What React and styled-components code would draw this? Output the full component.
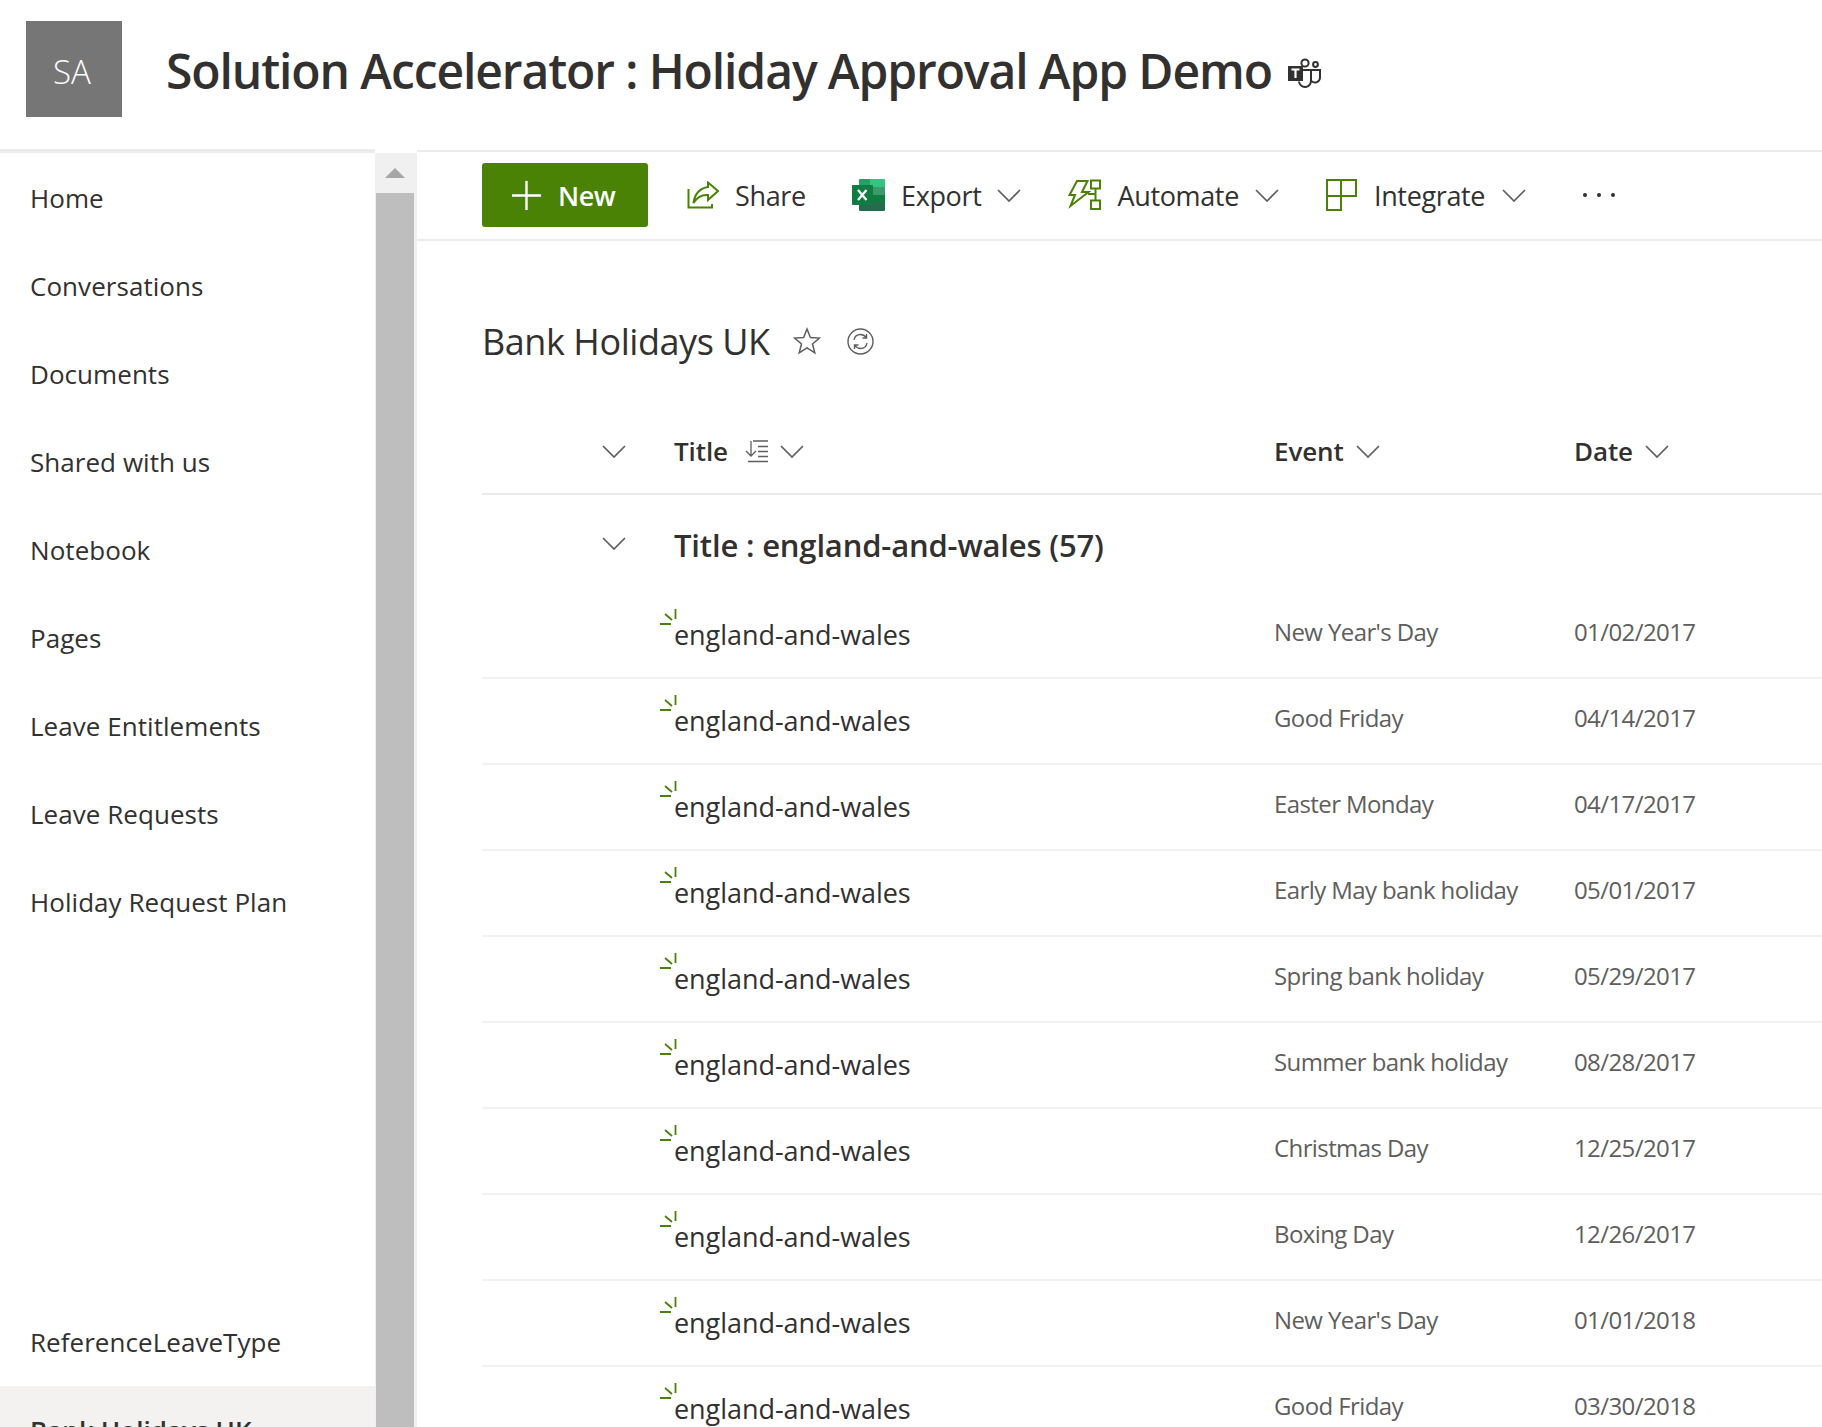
import React from 'react'
import styled, { createGlobalStyle } from 'styled-components'

const GlobalStyle = createGlobalStyle`
html,body{margin:0;padding:0;background:#fff;}
body{font-family:"Open Sans","Noto Sans",sans-serif;color:#323130;}
*{box-sizing:border-box;}
`

const navItems = ['Home', 'Conversations', 'Documents', 'Shared with us', 'Notebook', 'Pages', 'Leave Entitlements', 'Leave Requests', 'Holiday Request Plan']

const rows = [
  ["New Year's Day", '01/02/2017'],
  ['Good Friday', '04/14/2017'],
  ['Easter Monday', '04/17/2017'],
  ['Early May bank holiday', '05/01/2017'],
  ['Spring bank holiday', '05/29/2017'],
  ['Summer bank holiday', '08/28/2017'],
  ['Christmas Day', '12/25/2017'],
  ['Boxing Day', '12/26/2017'],
  ["New Year's Day", '01/01/2018'],
  ['Good Friday', '03/30/2018'],
]

function Chevron({ w = 24, color = '#605e5c' }) {
  return (
    <svg width={w} height={w / 2 + 1} viewBox="0 0 24 13" fill="none">
      <path d="M1 1l11 11L23 1" stroke={color} strokeWidth="1.7" />
    </svg>
  )
}

function Teams() {
  return (
    <svg width="33" height="31" viewBox="0 0 33 31" fill="none">
      <circle cx="17" cy="5" r="3.6" stroke="#323130" strokeWidth="2" />
      <circle cx="27.5" cy="6.5" r="2.4" stroke="#323130" strokeWidth="2" />
      <path d="M13 12h10v10.5a6 6 0 0 1-12 1" stroke="#323130" strokeWidth="2" />
      <path d="M23 12h9v8a5 5 0 0 1-9 2.5" stroke="#323130" strokeWidth="2" />
      <rect x="0" y="8" width="15" height="15" fill="#323130" />
      <path d="M3.5 11.5h8M7.5 11.5v8.5" stroke="#fff" strokeWidth="2.2" />
    </svg>
  )
}

function ShareIcon() {
  return (
    <svg width="32" height="28" viewBox="0 0 32 28" fill="none" stroke="#498205" strokeWidth="2">
      <path d="M1.500 8v18.500h23.500V23" />
      <path d="M21 1.500L31 10l-10 9v-5c-6-.5-11 2-14.500 8C7.500 13 13 7 21 6z" />
    </svg>
  )
}

function ExcelIcon() {
  return (
    <svg width="33" height="32" viewBox="0 0 33 32">
      <path d="M7 1a1 1 0 0 1 1-1h10v8H7z" fill="#21a366" />
      <path d="M18 0h14a1 1 0 0 1 1 1v7H18z" fill="#33c481" />
      <rect x="7" y="8" width="11" height="8" fill="#21a366" />
      <rect x="18" y="8" width="15" height="8" fill="#3a9a6c" />
      <rect x="7" y="16" width="26" height="8" fill="#107c41" />
      <path d="M7 24h26v7a1 1 0 0 1-1 1H8a1 1 0 0 1-1-1z" fill="#276b4e" />
      <rect x="0" y="6" width="21" height="20" rx="1" fill="#107c41" />
      <path d="M6 11l8.500 10M14.500 11L6 21" stroke="#fff" strokeWidth="2.300" />
    </svg>
  )
}

function AutomateIcon() {
  return (
    <svg width="33" height="32" viewBox="0 0 33 32" fill="none" stroke="#498205" strokeWidth="2">
      <path d="M9 2h10.500L14 13h6.500L2.500 27 7 16H1.500z" />
      <rect x="23" y="1.500" width="9" height="8" />
      <rect x="23" y="21.500" width="9" height="8.500" />
      <path d="M27.500 9.500v12M20 15h7.500" />
    </svg>
  )
}

function IntegrateIcon() {
  return (
    <svg width="31" height="32" viewBox="0 0 31 32" fill="none" stroke="#498205" strokeWidth="2">
      <path d="M1 1h29v16H15v14H1zM1 17h14M15 1v16" />
    </svg>
  )
}

function StarIcon() {
  return (
    <svg width="28" height="28" viewBox="0 0 28 28" fill="none">
      <path d="M14 2l3.400 8.500 9.100.6-7 5.800 2.300 8.900L14 20.900 6.200 25.800l2.300-8.900-7-5.800 9.100-.6z" stroke="#605e5c" strokeWidth="1.500" />
    </svg>
  )
}

function SyncIcon() {
  return (
    <svg width="27" height="27" viewBox="0 0 27 27" fill="none" stroke="#605e5c" strokeWidth="1.400">
      <circle cx="13.500" cy="13.500" r="12.500" />
      <path d="M7 12c.6-3.500 3.300-5.500 6.500-5.500 2.300 0 4.200 1 5.500 2.800M19.500 6v4h-4" />
      <path d="M20 15c-.6 3.500-3.300 5.500-6.500 5.500-2.300 0-4.200-1-5.500-2.800M7.500 21v-4h4" />
    </svg>
  )
}

function SortIcon() {
  return (
    <svg width="24" height="23" viewBox="0 0 24 23" fill="none" stroke="#605e5c" strokeWidth="1.300">
      <path d="M6 1v15M1 11l5 5 5-5" />
      <path d="M8 1h15M13 6.500h10M13 11.500h10M13 16.500h10M3 21.500h20" />
    </svg>
  )
}

function Glitter() {
  return (
    <svg width="18" height="17" viewBox="0 0 18 17" fill="none" stroke="#498205" strokeWidth="1.800">
      <path d="M0 15h11M5 5l7 6M15.500 0v10" />
    </svg>
  )
}

export default function App() {
  return (
    <Page>
      <GlobalStyle />
      <SiteHeader>
        <SiteLogo>SA</SiteLogo>
        <SiteTitle>Solution Accelerator : Holiday Approval App Demo</SiteTitle>
        <TeamsMark><Teams /></TeamsMark>
      </SiteHeader>
      <Body>
        <SideNav>
          {navItems.map((n) => <NavItem key={n}>{n}</NavItem>)}
          <NavItem $gap>ReferenceLeaveType</NavItem>
          <NavItem $active>Bank Holidays UK</NavItem>
        </SideNav>
        <NavScroll>
          <ScrollUp />
          <ScrollThumb />
        </NavScroll>
        <Main>
          <CommandBar>
            <NewButton>
              <svg width="29" height="29" viewBox="0 0 29 29" stroke="#fff" strokeWidth="2.400"><path d="M14.500 0v29M0 14.500h29" /></svg>
              New
            </NewButton>
            <Command $left={39} $width={149}><ShareIcon /><CommandLabel>Share</CommandLabel></Command>
            <Command $left={16}><ExcelIcon /><CommandLabel>Export</CommandLabel><Chevron /></Command>
            <Command $left={47}><AutomateIcon /><CommandLabel>Automate</CommandLabel><Chevron /></Command>
            <Command $left={47} $gap={17}><IntegrateIcon /><CommandLabel>Integrate</CommandLabel><Chevron /></Command>
            <MoreDots>
              <Dot /><Dot /><Dot />
            </MoreDots>
          </CommandBar>
          <ListHeading>
            <ListName>Bank Holidays UK</ListName>
            <ListActions>
              <StarIcon />
              <SyncIcon />
            </ListActions>
          </ListHeading>
          <ListTable>
            <HeaderRow>
              <ExpandCell><Chevron w={24} /></ExpandCell>
              <HeaderCell>Title <SortMark><SortIcon /></SortMark><Chevron /></HeaderCell>
              <HeaderCell>Event <Chevron /></HeaderCell>
              <HeaderCell>Date <Chevron /></HeaderCell>
            </HeaderRow>
            <GroupRow>
              <ExpandCell><Chevron w={24} /></ExpandCell>
              <GroupName>Title : england-and-wales (57)</GroupName>
            </GroupRow>
            {rows.map(([event, date], i) => (
              <DataRow key={i}>
                <span />
                <TitleCell><NewMark><Glitter /></NewMark>england-and-wales</TitleCell>
                <MetaCell>{event}</MetaCell>
                <MetaCell>{date}</MetaCell>
              </DataRow>
            ))}
          </ListTable>
        </Main>
      </Body>
    </Page>
  )
}

const Page = styled.div`
  width: 1822px;
  height: 1427px;
  overflow: hidden;
  display: flex;
  flex-direction: column;
`
const SiteHeader = styled.header`
  height: 149px;
  flex: none;
  display: flex;
  align-items: center;
  padding: 0 0 11px 26px;
`
const SiteLogo = styled.div`
  width: 96px;
  height: 96px;
  background: #767676;
  color: #fff;
  font-size: 33px;
  font-weight: 300;
  display: flex;
  align-items: center;
  justify-content: center;
  padding: 5px 4px 0 0;
`
const SiteTitle = styled.h1`
  margin: 4px 0 0 44px;
  font-size: 48px;
  font-weight: 550;
  line-height: 64px;
  letter-spacing: -1.1px;
  color: #323130;
  white-space: nowrap;
`
const TeamsMark = styled.span`
  margin: 8px 0 0 16px;
  display: flex;
`
const Body = styled.div`
  flex: 1;
  min-height: 0;
  display: flex;
`
const SideNav = styled.nav`
  width: 375px;
  flex: none;
  border-top: 4px solid #edebe9;
  padding-top: 1px;
  display: flex;
  flex-direction: column;
`
const NavItem = styled.a`
  height: 88px;
  flex: none;
  display: flex;
  align-items: center;
  padding-left: 30px;
  font-size: 26px;
  letter-spacing: 0.05px;
  color: #323130;
  font-weight: ${(p) => (p.$active ? 600 : 400)};
  background: ${(p) => (p.$active ? '#f3f2f1' : 'transparent')};
  margin-top: ${(p) => (p.$gap ? '352px' : '0')};
`
const NavScroll = styled.div`
  width: 42px;
  flex: none;
  margin-top: 4px;
  background: #f0f0f0;
  display: flex;
  flex-direction: column;
  align-items: center;
  padding-right: 3px;
`
const ScrollUp = styled.div`
  width: 0;
  height: 0;
  margin-top: 15px;
  border-left: 10px solid transparent;
  border-right: 10px solid transparent;
  border-bottom: 10px solid #a6a6a6;
`
const ScrollThumb = styled.div`
  width: 38px;
  flex: 1;
  margin-top: 15px;
  background: #bebebe;
`
const Main = styled.main`
  flex: 1;
  min-width: 0;
  margin-top: 1px;
  border-top: 2px solid #edebe9;
  display: flex;
  flex-direction: column;
`
const CommandBar = styled.div`
  height: 89px;
  flex: none;
  border-bottom: 2px solid #edebe9;
  padding: 0 0 1px 65px;
  display: flex;
  align-items: center;
`
const NewButton = styled.button`
  width: 166px;
  height: 64px;
  border: none;
  border-radius: 3px;
  background: #498205;
  color: #fff;
  font-family: inherit;
  font-size: 27px;
  font-weight: 600;
  letter-spacing: -0.5px;
  display: flex;
  align-items: center;
  gap: 17px;
  padding: 0 0 0 30px;
`
const Command = styled.div`
  display: flex;
  align-items: center;
  margin-left: ${(p) => p.$left}px;
  gap: ${(p) => p.$gap || 16}px;
  ${(p) => (p.$width ? `width: ${p.$width}px;` : '')}
`
const CommandLabel = styled.span`
  font-size: 27px;
  letter-spacing: -0.35px;
  color: #323130;
`
const MoreDots = styled.div`
  display: flex;
  gap: 10px;
  margin-left: 57px;
`
const Dot = styled.i`
  width: 4px;
  height: 4px;
  border-radius: 50%;
  background: #323130;
`
const ListHeading = styled.div`
  height: 50px;
  flex: none;
  margin: 75px 0 0 65px;
  display: flex;
  align-items: center;
  gap: 23px;
`
const ListName = styled.h2`
  margin: 0;
  font-size: 36px;
  font-weight: 500;
  letter-spacing: -0.45px;
  color: #323130;
`
const ListActions = styled.div`
  display: flex;
  align-items: center;
  gap: 26px;
`
const ListTable = styled.div`
  margin: 47px 0 0 65px;
`
const HeaderRow = styled.div`
  height: 82px;
  padding-bottom: 4px;
  display: grid;
  grid-template-columns: 192px 600px 300px 1fr;
  align-items: center;
  border-bottom: 2px solid #edebe9;
`
const ExpandCell = styled.div`
  padding-left: 120px;
  display: flex;
  align-items: center;
`
const HeaderCell = styled.div`
  display: flex;
  align-items: center;
  gap: 12px;
  font-size: 26px;
  font-weight: 600;
  letter-spacing: -0.1px;
`
const SortMark = styled.span`
  display: flex;
  margin: 0 -1px 0 5px;
`
const GroupRow = styled.div`
  height: 98px;
  padding-bottom: 2px;
  display: grid;
  grid-template-columns: 192px 1fr;
  align-items: center;
`
const GroupName = styled.div`
  font-size: 31px;
  font-weight: 600;
  letter-spacing: -0.17px;
  padding-top: 4px;
`
const DataRow = styled.div`
  height: 86px;
  display: grid;
  grid-template-columns: 192px 600px 300px 1fr;
  align-items: center;
  border-bottom: 2px solid #f3f2f1;
`
const TitleCell = styled.div`
  position: relative;
  font-size: 27px;
  letter-spacing: -0.05px;
  padding-bottom: 2px;
`
const NewMark = styled.span`
  position: absolute;
  left: -14px;
  top: -7px;
  display: flex;
`
const MetaCell = styled.div`
  font-size: 24px;
  letter-spacing: -0.6px;
  color: #605e5c;
  padding-bottom: 8px;
`
